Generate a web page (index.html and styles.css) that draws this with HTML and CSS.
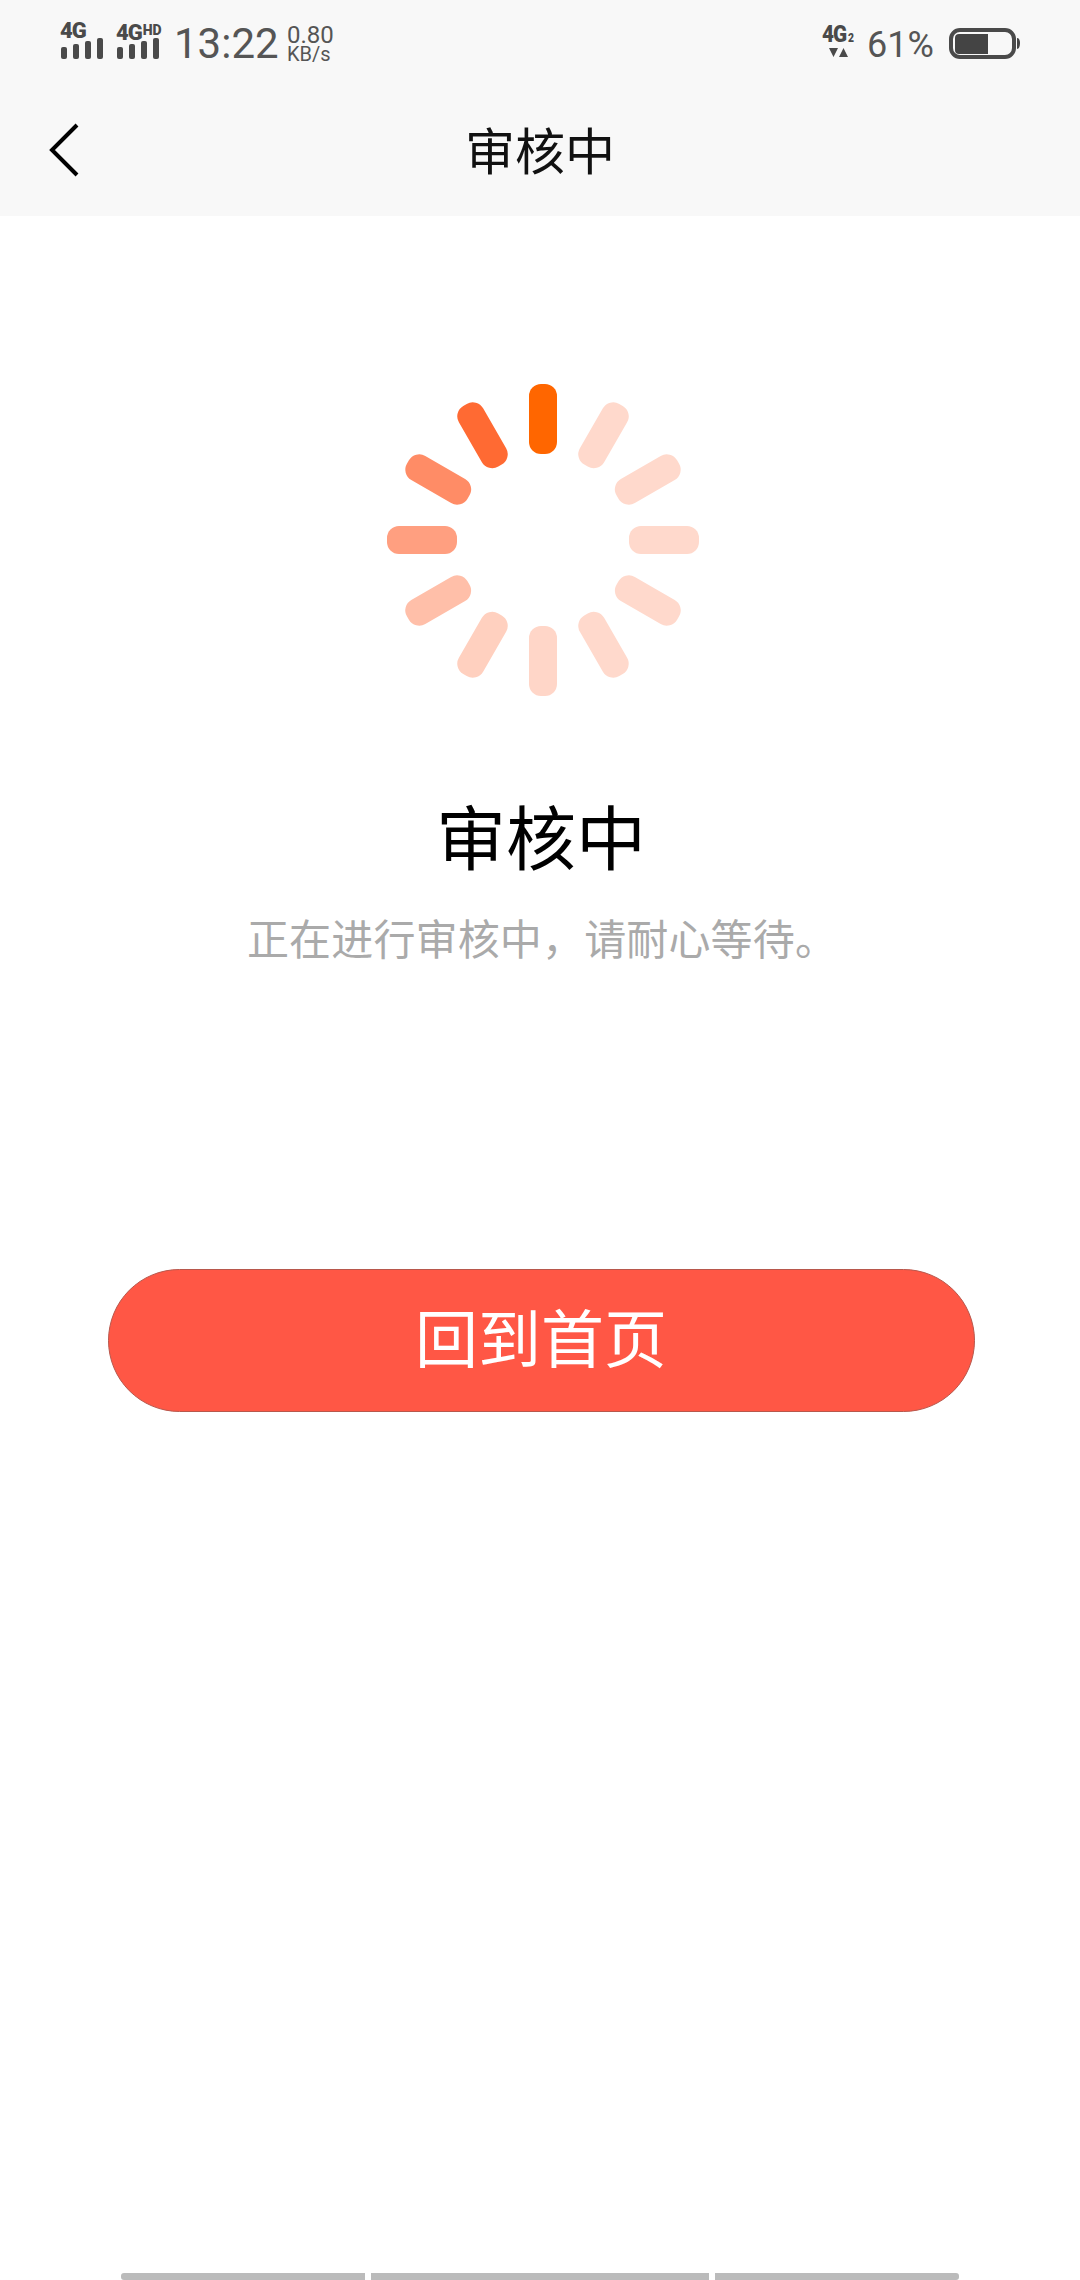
FILE: index.html
```html
<!DOCTYPE html>
<html lang="zh-CN">
<head>
<meta charset="utf-8">
<title>审核中</title>
<link rel="stylesheet" href="styles.css">
</head>
<body>
<div class="page">
  <header class="header">
    <div class="status">
      <div class="status-left">
        <div class="net">
          <div class="net-label">4G</div>
          <svg class="bars" width="44" height="22" viewBox="0 0 44 22"><rect x="1" y="9" width="6" height="12" rx="2"/><rect x="13" y="6" width="6" height="15" rx="2"/><rect x="25" y="3" width="6" height="18" rx="2"/><rect x="37" y="0" width="6" height="21" rx="2"/></svg>
        </div>
        <div class="net net-hd">
          <div class="net-label">4G<span class="hd">HD</span></div>
          <svg class="bars" width="44" height="22" viewBox="0 0 44 22"><rect x="1" y="9" width="6" height="12" rx="2"/><rect x="13" y="6" width="6" height="15" rx="2"/><rect x="25" y="3" width="6" height="18" rx="2"/><rect x="37" y="0" width="6" height="21" rx="2"/></svg>
        </div>
        <div class="time">13:22</div>
        <div class="speed"><div class="speed-num">0.80</div><div class="speed-unit">KB/s</div></div>
      </div>
      <div class="status-right">
        <div class="sim">
          <div class="sim-label">4G<span class="sim-two">2</span></div>
          <svg class="sim-arrows" width="20" height="9" viewBox="0 0 20 9"><path d="M0 0h9L4.500 9zM14.500 0L19 9h-9z"/></svg>
        </div>
        <div class="batt-text">61%</div>
        <svg class="battery" width="72" height="32" viewBox="0 0 72 32"><rect x="2" y="2" width="63" height="27" rx="9" class="batt-shell"/><path d="M10 6h29v20H10a4 4 0 0 1-4-4V10a4 4 0 0 1 4-4z" class="batt-fill"/><path d="M68 10c2 0 3 2 3 5s-1 6-3 6z" class="batt-fill"/></svg>
      </div>
    </div>
    <nav class="nav">
      <svg class="back" width="30" height="54" viewBox="0 0 30 54"><path d="M28 2L3 27l25 25"/></svg>
      <div class="nav-title">审核中</div>
    </nav>
  </header>
  <main class="main">
    <svg class="spinner" width="312" height="312" viewBox="-156 -156 312 312">
      <g>
        <rect class="s0" x="-14" y="-156" width="28" height="70" rx="12"/>
        <rect class="s1" x="-14" y="-156" width="28" height="70" rx="12" transform="rotate(30)"/>
        <rect class="s2" x="-14" y="-156" width="28" height="70" rx="12" transform="rotate(60)"/>
        <rect class="s3" x="-14" y="-156" width="28" height="70" rx="12" transform="rotate(90)"/>
        <rect class="s4" x="-14" y="-156" width="28" height="70" rx="12" transform="rotate(120)"/>
        <rect class="s5" x="-14" y="-156" width="28" height="70" rx="12" transform="rotate(150)"/>
        <rect class="s6" x="-14" y="-156" width="28" height="70" rx="12" transform="rotate(180)"/>
        <rect class="s7" x="-14" y="-156" width="28" height="70" rx="12" transform="rotate(210)"/>
        <rect class="s8" x="-14" y="-156" width="28" height="70" rx="12" transform="rotate(240)"/>
        <rect class="s9" x="-14" y="-156" width="28" height="70" rx="12" transform="rotate(270)"/>
        <rect class="s10" x="-14" y="-156" width="28" height="70" rx="12" transform="rotate(300)"/>
        <rect class="s11" x="-14" y="-156" width="28" height="70" rx="12" transform="rotate(330)"/>
      </g>
    </svg>
    <h1 class="title">审核中</h1>
    <p class="subtitle">正在进行审核中，请耐心等待。</p>
    <button class="home-btn" type="button">回到首页</button>
  </main>
  <div class="nav-bar">
    <span class="seg seg-a"></span>
    <span class="seg seg-b"></span>
    <span class="seg seg-c"></span>
  </div>
</div>
</body>
</html>
```
FILE: styles.css
```css
* { box-sizing: border-box; }
html, body { margin: 0; padding: 0; background: #fff; }
body { font-family: Roboto, "Noto Sans CJK SC", sans-serif; }
.page { width: 1080px; height: 2280px; display: flex; flex-direction: column; overflow: hidden; }

.header { height: 216px; background: #f8f8f8; display: flex; flex-direction: column; }
.status { height: 88px; padding: 20px 59px 0 60px; display: flex; justify-content: space-between; align-items: flex-start; color: #4a4a4a; }
.status-left, .status-right { display: flex; align-items: flex-start; }
.net { width: 44px; margin-right: 12px; display: flex; flex-direction: column; }
.net-hd { margin-right: 14px; }
.net-label { font-size: 22px; line-height: 19px; font-weight: 900; letter-spacing: -1px; white-space: nowrap; height: 17px; margin-top: 1px; }
.hd { font-size: 14px; vertical-align: 5px; letter-spacing: 0; margin-left: 1px; }
.bars { fill: #4a4a4a; display: block; }
.time { font-size: 42px; line-height: 48px; width: 113px; color: #555; }
.speed { display: flex; flex-direction: column; margin-top: 5px; }
.speed-num { font-size: 24px; line-height: 20px; color: #555; }
.speed-unit { font-size: 20px; line-height: 18px; color: #555; }
.status-right { padding-top: 4px; }
.sim { width: 34px; margin-right: 11px; }
.sim-label { font-size: 24px; line-height: 20px; font-weight: 900; letter-spacing: -1px; transform: scaleX(.86); transform-origin: left; white-space: nowrap; height: 24px; }
.sim-two { font-size: 12px; margin-left: 2px; }
.sim-arrows { display: block; fill: #4a4a4a; margin-left: 7px; }
.batt-text { font-size: 36px; line-height: 42px; width: 82px; color: #555; }
.battery { display: block; margin-top: 4px; }
.batt-shell { fill: none; stroke: #4a4a4a; stroke-width: 4px; }
.batt-fill { fill: #444; }

.nav { flex: 1; display: flex; align-items: center; justify-content: center; position: relative; padding-bottom: 8px; }
.back { position: absolute; left: 49px; top: 35px; fill: none; stroke: #000; stroke-width: 4px; stroke-linejoin: miter; }
.nav-title { font-family: "Noto Sans CJK SC", sans-serif; font-size: 50px; line-height: 60px; color: #111; }

.main { flex: 1; display: flex; flex-direction: column; align-items: center; font-family: "Noto Sans CJK SC", sans-serif; }
.spinner { display: block; margin: 168px 0 0 6px; }
.s0 { fill: #ff6600; }
.s1, .s2, .s3, .s4, .s5 { fill: #ffd9cc; }
.s6 { fill: #ffd6c8; }
.s7 { fill: #ffd0bf; }
.s8 { fill: #ffbfa9; }
.s9 { fill: #ff9f80; }
.s10 { fill: #ff8c66; }
.s11 { fill: #ff6a33; }

.title { margin: 94px 0 0 2px; font-size: 70px; line-height: 90px; font-weight: 400; color: #000; }
.subtitle { margin: 27px 0 0 4px; font-size: 42px; line-height: 60px; color: #aaa; letter-spacing: .15px; }
.home-btn { margin: 302px 0 0 2px; width: 867px; height: 143px; border: 1px solid #b8574c; border-radius: 72px; background: #ff5745; color: #fff; font-family: "Noto Sans CJK SC", sans-serif; font-size: 63px; font-weight: 400; padding: 0 0 12px; }

.nav-bar { height: 7px; display: flex; padding-left: 121px; gap: 6px; }
.seg { display: block; height: 7px; background: #bbb; }
.seg-a { width: 244px; border-radius: 3px 0 0 3px; }
.seg-b { width: 338px; }
.seg-c { width: 244px; border-radius: 0 3px 3px 0; }
```
